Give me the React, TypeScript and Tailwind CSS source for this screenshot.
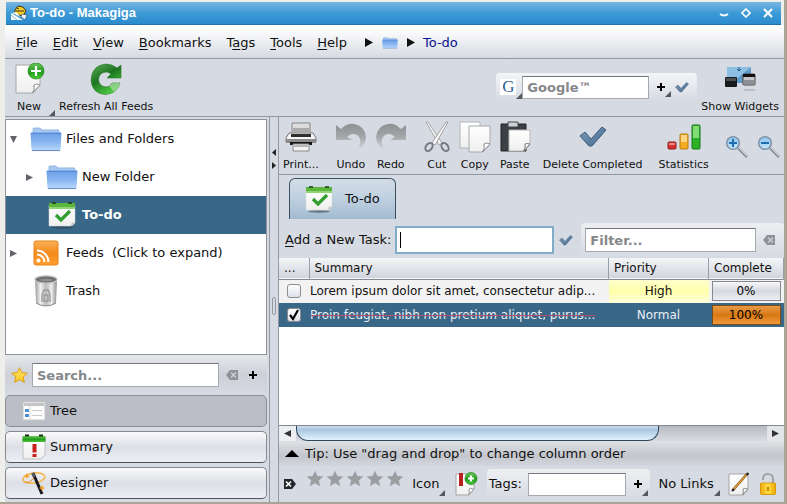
import React from "react";

type Kids = { children?: React.ReactNode };

function Gradients() {
  return (
    <svg width="0" height="0" className="absolute" aria-hidden="true">
      <defs>
        <linearGradient id="folder" x1="0" y1="0" x2="0" y2="1">
          <stop offset="0" stopColor="#6b9fe6" />
          <stop offset="0.5" stopColor="#86b4f0" />
          <stop offset="1" stopColor="#b4d6fb" />
        </linearGradient>
        <linearGradient id="green" x1="0" y1="0" x2="0" y2="1">
          <stop offset="0" stopColor="#6fca5a" />
          <stop offset="0.55" stopColor="#1f9a1c" />
          <stop offset="1" stopColor="#4cc93a" />
        </linearGradient>
        <linearGradient id="refresh" x1="0" y1="0" x2="0.6" y2="1">
          <stop offset="0" stopColor="#5fae58" />
          <stop offset="0.5" stopColor="#1d7420" />
          <stop offset="1" stopColor="#4ccf44" />
        </linearGradient>
        <linearGradient id="paper" x1="0" y1="0" x2="0" y2="1">
          <stop offset="0" stopColor="#ffffff" />
          <stop offset="1" stopColor="#efefef" />
        </linearGradient>
        <linearGradient id="orange" x1="0" y1="0" x2="0" y2="1">
          <stop offset="0" stopColor="#fbb25a" />
          <stop offset="0.5" stopColor="#f68a1c" />
          <stop offset="1" stopColor="#ffa030" />
        </linearGradient>
        <linearGradient id="metal" x1="0" y1="0" x2="1" y2="0">
          <stop offset="0" stopColor="#9a9a9a" />
          <stop offset="0.25" stopColor="#f0f0f0" />
          <stop offset="0.5" stopColor="#bababa" />
          <stop offset="0.75" stopColor="#ececec" />
          <stop offset="1" stopColor="#8c8c8c" />
        </linearGradient>
        <linearGradient id="fade" x1="0" y1="0" x2="0" y2="1">
          <stop offset="0" stopColor="#8e9194" />
          <stop offset="0.5" stopColor="#a3a6a9" />
          <stop offset="1" stopColor="#d0d3d8" />
        </linearGradient>
        <linearGradient id="steel" x1="0" y1="0" x2="1" y2="1">
          <stop offset="0" stopColor="#7d9cba" />
          <stop offset="1" stopColor="#466a8c" />
        </linearGradient>
        <linearGradient id="gold" x1="0" y1="0" x2="1" y2="0">
          <stop offset="0" stopColor="#f0a80c" />
          <stop offset="0.5" stopColor="#ffe04a" />
          <stop offset="1" stopColor="#eda400" />
        </linearGradient>
        <linearGradient id="lens" x1="0" y1="0" x2="0" y2="1">
          <stop offset="0" stopColor="#8cc4ee" />
          <stop offset="1" stopColor="#c5e6fa" />
        </linearGradient>
        <linearGradient id="star" x1="0" y1="0" x2="0" y2="1">
          <stop offset="0" stopColor="#ffe66a" />
          <stop offset="1" stopColor="#fbc51f" />
        </linearGradient>
      </defs>
    </svg>
  );
}

function FolderIcon({ className }: { className: string }) {
  return (
    <svg viewBox="0 0 32 26" preserveAspectRatio="none" className={className} aria-hidden="true">
      <path d="M3 8V2q0-1 1-1h6l2 2h16q1 0 1 1v6z" fill="#a9c8f1" stroke="#7ba4dc" strokeWidth="0.7" />
      <path d="M.5 6h31L30.500 24h-29z" fill="url(#folder)" />
      <path d="M1 6.500h30" stroke="#4d82cf" />
      <path d="M2 24.500h28" stroke="#6185b8" />
    </svg>
  );
}

function TodoIcon() {
  return (
    <svg viewBox="0 0 28 28" className="size-7 shrink-0" aria-hidden="true">
      <ellipse cx="14" cy="26.500" rx="11" ry="1.200" fill="#2c3f50" opacity="0.6" />
      <path d="M1 4h26v18q-2 3-6 3H1z" fill="url(#paper)" stroke="#d6d6d6" strokeWidth="0.5" />
      <path d="M1 2h26v6H1z" fill="#5cb63e" />
      <path d="M1 6h26v2H1z" fill="#8fd474" />
      <path d="M4 2h4M20 2h4" stroke="#163d10" strokeWidth="1.500" />
      <path d="M27 21q-1 4-7 4.500 4-1 3.500-3.500z" fill="#c9c9c9" />
      <path d="M8 14l5 5 9-9" fill="none" stroke="#2f9e2c" strokeWidth="3.200" />
    </svg>
  );
}

function FeedIcon() {
  return (
    <svg viewBox="0 0 26 26" className="size-[26px]" aria-hidden="true">
      <rect x="1" y="1" width="24" height="24" rx="2" fill="url(#orange)" stroke="#e98217" />
      <circle cx="5.500" cy="20.500" r="2" fill="#fff" />
      <path d="M4 14.500a7.500 7.500 0 0 1 7.500 7.500M4 10.500a11.500 11.500 0 0 1 11.500 11.500" fill="none" stroke="#fff" strokeWidth="2" />
    </svg>
  );
}

function TrashIcon() {
  return (
    <svg viewBox="0 0 24 32" className="h-8 w-6" aria-hidden="true">
      <path d="M1 4l1 24q10 6 20 0l1-24z" fill="url(#metal)" />
      <ellipse cx="12" cy="4.500" rx="11" ry="3.700" fill="#6e6e6e" stroke="#c6c6c6" strokeWidth="1.200" />
      <path d="M4 5q8-3 16 0-8 3-16 0z" fill="#8d8d8d" />
      <path d="M8 27v-7l2-5h4l2 5v7M10 20h4v6h-4z" fill="none" stroke="#9a9a9a" strokeWidth="1.300" />
      <path d="M2 28q10 6 20 0" fill="none" stroke="#8b8b8b" />
    </svg>
  );
}

function PlusBadge({ x, y, r }: { x: number; y: number; r: number }) {
  return (
    <g>
      <circle cx={x} cy={y} r={r} fill="url(#green)" stroke="#2b8d25" strokeWidth="0.8" />
      <path d={`M${x - r + 3} ${y}h${2 * r - 6}M${x} ${y - r + 3}v${2 * r - 6}`} stroke="#fff" strokeWidth="2.200" />
    </g>
  );
}

function NewIcon() {
  return (
    <svg viewBox="0 0 32 32" className="size-8" aria-hidden="true">
      <path d="M3 2h24v20l-7 8H3z" fill="url(#paper)" stroke="#a6a6a6" />
      <path d="M27 22q-4-2-6 0 1 5-1.500 8z" fill="#fdfdfd" stroke="#8d8d8d" />
      <PlusBadge x={23} y={8} r={8} />
    </svg>
  );
}

function RefreshIcon() {
  return (
    <svg viewBox="0 0 32 32" className="size-8" aria-hidden="true">
      <path d="M31 2v13H17l4-4q-2-2-5-2-7 .5-7.500 7.500Q9 23 16 24q4 0 6-4h8q-2 10-14 11.500Q2 31 1 17 2 2 16 1q6 0 11 4z" fill="url(#refresh)" stroke="#2c7c2b" strokeWidth="0.6" />
      <path d="M22 20h8q-1 6-6 9l-5-6q2-1 3-3z" fill="#b9dfb9" opacity="0.6" />
    </svg>
  );
}

function WidgetsIcon() {
  return (
    <svg viewBox="0 0 32 28" className="h-7 w-8" aria-hidden="true">
      <path d="M3 2h24v16H3z" fill="#5f9cca" />
      <path d="M3 2h24L10 16H3z" fill="#8dbfe2" />
      <path d="M15 2v4M13 4l2 2 2-2" stroke="#205784" fill="none" />
      <rect x="1" y="12" width="12" height="10" rx="1" fill="#17191c" />
      <path d="M2 13h10v3H2z" fill="#4b4e53" />
      <rect x="19" y="9" width="12" height="11" rx="1" fill="#c5c7ca" stroke="#444" />
      <path d="M19 9h12v3H19z" fill="#111" />
      <path d="M20 15h10v4H20z" fill="#8d9095" />
      <path d="M20 25h11" stroke="#b9bdc5" strokeWidth="2" />
    </svg>
  );
}

function PrintIcon() {
  return (
    <svg viewBox="0 0 32 32" className="size-8" aria-hidden="true">
      <path d="M7 2h18v11H7z" fill="#dcdcdc" stroke="#858585" />
      <path d="M8 7h16v4H8z" fill="#aaa" />
      <path d="M4 12h24l3 5v4H1v-4z" fill="#f5f5f5" stroke="#777" />
      <path d="M6 13h20v3H6z" fill="#2e2e2e" />
      <path d="M1 18h30v4H1z" fill="#8b8b8b" />
      <path d="M5 21h22v3H5z" fill="#141414" />
      <path d="M8 23h16v7H8z" fill="#f1f1f1" stroke="#8a8a8a" />
      <path d="M8 24h16v2H8z" fill="#b8b8b8" />
    </svg>
  );
}

function TurnIcon({ flip }: { flip?: boolean }) {
  return (
    <svg viewBox="0 0 32 32" className={flip ? "size-8 -scale-x-100" : "size-8"} aria-hidden="true">
      <path d="M1 4l5 4q6-6 13-5 11 2 12 13 0 8-8 12 3-6 2-10-2-5-7-5-3 0-6 3l5 3H1z" fill="url(#fade)" />
    </svg>
  );
}

function CutIcon() {
  return (
    <svg viewBox="0 0 28 32" className="h-8 w-7" aria-hidden="true">
      <path d="M3 1l2 0 14 21-3 2z" fill="#f1f1f1" stroke="#9b9b9b" strokeWidth="0.8" />
      <path d="M25 1l-2 0L9 22l3 2z" fill="#fcfcfc" stroke="#8d8d8d" strokeWidth="0.8" />
      <ellipse cx="6" cy="26" rx="3" ry="4.500" transform="rotate(38 6 26)" fill="none" stroke="#757a80" strokeWidth="2" />
      <ellipse cx="22" cy="26" rx="3" ry="4.500" transform="rotate(-38 22 26)" fill="none" stroke="#757a80" strokeWidth="2" />
    </svg>
  );
}

function CopyIcon() {
  return (
    <svg viewBox="0 0 32 32" className="size-8" aria-hidden="true">
      <path d="M1 1h20v26H1z" fill="url(#paper)" stroke="#b2b5b9" />
      <path d="M10 5h21v18l-7 8H10z" fill="url(#paper)" stroke="#a5a8ac" />
      <path d="M31 23q-4-2-6 0 1 5-1.500 8z" fill="#fdfdfd" stroke="#8d8d8d" />
    </svg>
  );
}

function PasteIcon() {
  return (
    <svg viewBox="0 0 32 32" className="size-8" aria-hidden="true">
      <path d="M2 3h25v27H2z" fill="#3c3f45" stroke="#222" />
      <path d="M9 1h10v5H9z" fill="#cfd1d4" stroke="#444" />
      <path d="M10 9h21v15l-6 6H10z" fill="url(#paper)" stroke="#b8b8b8" />
      <path d="M31 23q-4-1-5 0 1 4-1.500 7z" fill="#fdfdfd" stroke="#777" />
    </svg>
  );
}

function CheckMark({ className }: { className: string }) {
  return (
    <svg viewBox="0 0 28 22" className={className} aria-hidden="true">
      <path d="M1 10l5-4 6 7L23 1l4 3-14 16h-3z" fill="url(#steel)" stroke="#3f5f7e" strokeWidth="1" />
    </svg>
  );
}

function StatsIcon() {
  return (
    <svg viewBox="0 0 34 26" className="h-[26px] w-[34px]" aria-hidden="true">
      <rect x="1" y="18" width="8" height="7" rx="1" fill="#d8312e" stroke="#8b1d1b" />
      <rect x="2" y="19" width="6" height="2" fill="#ee8a86" />
      <rect x="13" y="10" width="8" height="15" rx="1" fill="#f6ab22" stroke="#b87a12" />
      <rect x="14" y="11" width="6" height="7" fill="#fbd685" />
      <rect x="25" y="1" width="8" height="24" rx="1" fill="#2bb224" stroke="#17761a" />
      <rect x="26" y="2" width="6" height="12" fill="#82dc76" />
    </svg>
  );
}

function ZoomIcon({ plus }: { plus?: boolean }) {
  return (
    <svg viewBox="0 0 24 24" className="size-6" aria-hidden="true">
      <path d="M13 13l9 9" stroke="#8b939c" strokeWidth="2.600" />
      <path d="M13 12l9 9" stroke="#d4d8dd" strokeWidth="1" />
      <circle cx="8" cy="8" r="6.300" fill="url(#lens)" stroke="#7f93a6" strokeWidth="1.600" />
      <path d={plus ? "M4 8h8M8 4v8" : "M4 8h8"} stroke="#1f6db0" strokeWidth="2" />
    </svg>
  );
}

const STAR = "M12 1l3.200 7 7.800.8-5.800 5.200 1.700 7.700L12 17.800 5.100 21.700l1.700-7.700L1 8.800 8.800 8z";

function EraseIcon({ className, dark }: { className: string; dark?: boolean }) {
  return (
    <svg viewBox="0 0 14 12" className={className} aria-hidden="true">
      <path d="M5 1h8v10H5L1 6z" fill={dark ? "#22252a" : "#8e9196"} />
      <path d="M6 3.500l5 5M11 3.500l-5 5" stroke={dark ? "#fff" : "#c9ccd2"} strokeWidth="1.600" />
    </svg>
  );
}

function PlusGlyph() {
  return (
    <svg viewBox="0 0 8 8" className="size-2" aria-hidden="true">
      <path d="M0 4h8M4 0v8" stroke="#000" strokeWidth="2" />
    </svg>
  );
}

function Corner() {
  return (
    <svg viewBox="0 0 6 6" className="size-[6px] self-end" aria-hidden="true">
      <path d="M6 0v6H0z" fill="#55585e" />
    </svg>
  );
}

function Triangle({ className }: { className: string }) {
  return (
    <svg viewBox="0 0 8 8" preserveAspectRatio="none" className={className} aria-hidden="true">
      <path d="M0 0l8 4-8 4z" fill="currentColor" />
    </svg>
  );
}

function TreeViewIcon() {
  return (
    <svg viewBox="0 0 24 20" className="h-5 w-6" aria-hidden="true">
      <path d="M1 1h22v18H1z" fill="#fcfcfc" stroke="#c7c7c7" />
      <path d="M2 2h20v3H2z" fill="#c3c5c8" />
      <path d="M3 8h4v3H3zM3 13h4v3H3z" fill="#4f8fd0" />
      <path d="M8 5v14" stroke="#ddd" />
      <path d="M10 9.500h10M10 14.500h10" stroke="#c8cacd" />
    </svg>
  );
}

function SummaryIcon() {
  return (
    <svg viewBox="0 0 24 26" className="h-[26px] w-6" aria-hidden="true">
      <path d="M1 3h22v18l-4 4H1z" fill="url(#paper)" stroke="#c0c0c0" />
      <path d="M.5 2h23v6H.5z" fill="url(#green)" />
      <path d="M3 1.500h4M17 1.500h4" stroke="#12330e" strokeWidth="2" />
      <path d="M10.500 10h4v8.500h-4zM10.500 20h4v3h-4z" fill="#c61f1c" />
    </svg>
  );
}

function WandIcon() {
  return (
    <svg viewBox="0 0 24 24" className="size-6" aria-hidden="true">
      <ellipse cx="12" cy="7" rx="11" ry="5" fill="none" stroke="#f3b64b" strokeWidth="1.500" transform="rotate(-8 12 7)" />
      <path d="M3 12q5 0 9-5" fill="none" stroke="#ee8a1c" />
      <path d="M11 2l9 21" stroke="#17191c" strokeWidth="3" />
      <path d="M10.500 2l2 4" stroke="#55585c" strokeWidth="3" />
      <path d="M5 2l1 2 2 1-2 1-1 2-1-2-2-1 2-1zM20 14l1 2 2 1-2 1-1 2-1-2-2-1 2-1z" fill="#f7a128" />
    </svg>
  );
}

function FlagNoteIcon() {
  return (
    <svg viewBox="0 0 24 24" className="size-6" aria-hidden="true">
      <path d="M2 2h18v15l-5 6H2z" fill="url(#paper)" stroke="#a5a5a5" />
      <path d="M5 1h4v13H5z" fill="#b8211f" />
      <path d="M20 17q-4-1-5 0 1 3-.5 6z" fill="#fff" stroke="#999" />
      <PlusBadge x={17} y={6.5} r={6} />
    </svg>
  );
}

function NoteIcon() {
  return (
    <svg viewBox="0 0 22 24" className="h-6 w-[22px]" aria-hidden="true">
      <path d="M1 2h19v15l-5 6H1z" fill="url(#paper)" stroke="#a5a5a5" />
      <path d="M20 17q-4-1-5 0 1 3-.5 6z" fill="#fff" stroke="#888" />
      <path d="M19 2L5 18" stroke="#7a4a12" strokeWidth="2.600" />
      <path d="M19 2L5 18" stroke="#e8a640" strokeWidth="1.200" />
      <path d="M20.500 1l-2 2M6 17L4 19" stroke="#222" strokeWidth="2" />
    </svg>
  );
}

function LockIcon() {
  return (
    <svg viewBox="0 0 18 24" className="h-6 w-[18px]" aria-hidden="true">
      <path d="M4 8V7q0-5 5-5t5 5v5" fill="none" stroke="#a3a6aa" strokeWidth="2.200" />
      <rect x="1.500" y="11" width="15" height="11.500" rx="1" fill="url(#gold)" stroke="#d79a08" />
      <path d="M8 15h2v4H8z" fill="#c58a05" />
    </svg>
  );
}

function AppIcon() {
  return (
    <svg viewBox="0 0 18 16" className="h-4 w-[18px]" aria-hidden="true">
      <path d="M5 5l3-4 5 1 3 4-3 5-8-2z" fill="#f8cb2d" stroke="#3b3410" />
      <path d="M6 6h8M7 3l2 1" stroke="#3b3410" />
      <path d="M12 9l5 1-2 5-4-3z" fill="#e9f2fb" stroke="#2c4d6b" strokeWidth="0.6" />
      <path d="M1 8l12 7H1zM2 8l4-1 5 5" fill="#fff" />
      <path d="M1 10l6 5M4 9l7 5" stroke="#84b9df" />
    </svg>
  );
}

function Mnemonic({ text, at }: { text: string; at: number }) {
  return (
    <>
      {text.slice(0, at)}
      <span className="underline underline-offset-2">{text[at]}</span>
      {text.slice(at + 1)}
    </>
  );
}

function Tool({ label, icon, className }: { label: string; icon: React.ReactNode; className?: string }) {
  return (
    <button type="button" className={`flex flex-col items-center gap-1 text-[11px] leading-4 whitespace-nowrap ${className ?? ""}`}>
      <span className="flex h-8 items-center">{icon}</span>
      {label}
    </button>
  );
}

function TreeRow({ children, className }: Kids & { className?: string }) {
  return <li className={`flex h-[38px] items-center ${className ?? ""}`}>{children}</li>;
}

function SideButton({ icon, label, pressed }: { icon: React.ReactNode; label: string; pressed?: boolean }) {
  return (
    <button
      type="button"
      aria-pressed={!!pressed}
      className={`flex h-8 items-center gap-[3px] rounded-[5px] border pl-[15px] text-left ${
        pressed
          ? "border-[#8b8e95] bg-[#bbbec7]"
          : "border-[#85888e] border-b-[#4f5258] bg-linear-to-b from-[#fafafb] via-[#dcdfe6] to-[#edeff5]"
      }`}
    >
      <span className="flex w-[26px] justify-center">{icon}</span>
      {label}
    </button>
  );
}

const field =
  "min-w-0 border border-[#a4a8af] border-t-[#74777d] bg-white px-1 text-[13px] font-bold text-black placeholder:text-[#85878a] placeholder:opacity-100 outline-none";

const menus: [string, number][] = [
  ["File", 0],
  ["Edit", 0],
  ["View", 0],
  ["Bookmarks", 0],
  ["Tags", 1],
  ["Tools", 0],
  ["Help", 0],
];

const tasks = [
  { done: false, text: "Lorem ipsum dolor sit amet, consectetur adip...", priority: "High", complete: 0 },
  { done: true, text: "Proin feugiat, nibh non pretium aliquet, purus...", priority: "Normal", complete: 100 },
];

function TitleBar() {
  return (
    <header className="mr-[3px] ml-px mt-0.5 flex h-[23px] items-center bg-linear-to-b from-[#78b7e1] via-[#3c9ad6] via-50% to-[#2a8bcd] pr-2 pl-1 text-white border-b border-[#2270a8]">
      <AppIcon />
      <h1 className="ml-0.5 flex-1 font-['Liberation_Sans',Arial,sans-serif] text-[13px] leading-5 font-bold">To-do - Makagiga</h1>
      <button type="button" aria-label="Minimize" className="mr-3">
        <svg viewBox="0 0 10 10" className="size-[10px]"><path d="M1 6q4 3 8 0" stroke="#fff" strokeWidth="2" fill="none" /></svg>
      </button>
      <button type="button" aria-label="Maximize" className="mr-3">
        <svg viewBox="0 0 10 10" className="size-[10px]"><path d="M5 1l4 4-4 4-4-4z" stroke="#fff" strokeWidth="1.600" fill="none" /></svg>
      </button>
      <button type="button" aria-label="Close">
        <svg viewBox="0 0 10 10" className="size-[10px]"><path d="M1 1l8 8M9 1L1 9" stroke="#fff" strokeWidth="2.200" fill="none" /></svg>
      </button>
    </header>
  );
}

function MenuBar() {
  return (
    <nav className="flex h-[34px] items-center border-b border-[#9498a1] bg-linear-to-b from-white from-10% to-[#d6dae2] pt-[2px] pl-[11px]">
      <ul className="flex gap-[15px]">
        {menus.map(([text, at]) => (
          <li key={text}>
            <button type="button"><Mnemonic text={text} at={at} /></button>
          </li>
        ))}
      </ul>
      <Triangle className="ml-[18px] h-[9px] w-2" />
      <FolderIcon className="ml-[9px] h-3 w-4" />
      <Triangle className="ml-[9px] h-[9px] w-2" />
      <a href="#todo" className="ml-2 text-[#0b1190]">To-do</a>
    </nav>
  );
}

function MainToolBar() {
  return (
    <div className="flex h-[58px] items-start border-b border-[#9498a1] pr-[5px] pt-1">
      <div className="flex h-[53px] pl-2">
        <Tool label="New" icon={<NewIcon />} />
        <span className="ml-1 flex"><Corner /></span>
      </div>
      <Tool label="Refresh All Feeds" icon={<RefreshIcon />} className="ml-1" />
      <div className="mt-[10px] mr-1 ml-auto flex h-7 items-center rounded-[4px] bg-linear-to-b from-[#f4f5f7] to-[#d6dae2] px-1">
        <button type="button" aria-label="Search engine" className="flex h-6 items-center">
          <span className="w-4 bg-white text-center font-['Liberation_Serif',serif] text-[17px] leading-4 text-[#2c5f94]">G</span>
          <Corner />
        </button>
        <input aria-label="Google search" placeholder="Google™" className={`${field} h-[23px] w-[127px]`} />
        <button type="button" aria-label="Add" className="ml-2 flex h-5 items-center"><PlusGlyph /><Corner /></button>
        <button type="button" aria-label="Search" className="mr-1 ml-1"><CheckMark className="h-[11px] w-[14px]" /></button>
      </div>
      <Tool label="Show Widgets" icon={<WidgetsIcon />} />
    </div>
  );
}

function Sidebar() {
  return (
    <aside className="flex w-[265px] shrink-0 flex-col border-r border-[#9498a1] pt-0.5 pr-[2px] pb-[3px]">
      <ul className="min-h-[235px] flex-1 border border-[#8d9199] bg-white">
        <TreeRow className="pl-1">
          <Triangle className="size-[7px] rotate-90 text-[#606368]" />
          <FolderIcon className="mr-1 ml-[13px] h-[25px] w-8" />Files and Folders
        </TreeRow>
        <TreeRow className="pl-5">
          <Triangle className="size-[7px] text-[#606368]" />
          <FolderIcon className="mr-1 ml-[13px] h-[25px] w-8" />New Folder
        </TreeRow>
        <TreeRow className="bg-[#386788] pl-[42px] font-bold text-white">
          <TodoIcon /><span className="ml-[6px]">To-do</span>
        </TreeRow>
        <TreeRow className="pl-1">
          <Triangle className="size-[7px] text-[#606368]" />
          <span className="mr-1 ml-[13px] flex w-8 justify-center"><FeedIcon /></span>
          <span className="whitespace-pre">Feeds  (Click to expand)</span>
        </TreeRow>
        <TreeRow className="pl-6">
          <span className="mr-1 flex w-8 justify-center"><TrashIcon /></span>Trash
        </TreeRow>
      </ul>
      <div className="flex h-10 items-center bg-linear-to-b from-[#e6e8ec] via-[#cdd0d7] to-[#d6dae2] pr-[10px] pl-1">
        <svg viewBox="0 0 24 24" className="mr-1 ml-0.5 size-[17px]" aria-hidden="true">
          <path d={STAR} fill="url(#star)" stroke="#d99c14" strokeWidth="1.400" />
        </svg>
        <input aria-label="Search" placeholder="Search..." className={`${field} h-6 flex-1`} />
        <button type="button" aria-label="Clear search" className="mr-[10px] ml-[6px]"><EraseIcon className="h-3 w-[14px]" /></button>
        <button type="button" aria-label="Add"><PlusGlyph /></button>
      </div>
      <div className="flex flex-col gap-1">
        <SideButton pressed icon={<TreeViewIcon />} label="Tree" />
        <SideButton icon={<SummaryIcon />} label="Summary" />
        <SideButton icon={<WandIcon />} label="Designer" />
      </div>
    </aside>
  );
}

function Splitter() {
  return (
    <div className="flex w-[9px] shrink-0 flex-col items-center border-r border-[#9498a1]">
      <Triangle className="mt-8 h-[7px] w-1 rotate-180 text-[#222]" />
      <Triangle className="mt-[6px] h-[7px] w-1 text-[#222]" />
      <span className="mt-32 h-[18px] w-1 rounded-sm border border-[#94979e]" />
    </div>
  );
}

function EditorToolBar() {
  return (
    <div className="flex h-[58px] items-start gap-2 border-b border-[#9498a1] pt-1 pl-1">
      <Tool label="Print..." icon={<PrintIcon />} />
      <Tool label="Undo" icon={<TurnIcon />} className="ml-2" />
      <Tool label="Redo" icon={<TurnIcon flip />} />
      <Tool label="Cut" icon={<CutIcon />} className="ml-2" />
      <Tool label="Copy" icon={<CopyIcon />} />
      <Tool label="Paste" icon={<PasteIcon />} />
      <Tool label="Delete Completed" icon={<CheckMark className="h-[22px] w-7" />} className="ml-1" />
      <Tool label="Statistics" icon={<StatsIcon />} className="ml-2" />
      <button type="button" aria-label="Zoom in" className="mt-[14px] ml-2"><ZoomIcon plus /></button>
      <button type="button" aria-label="Zoom out" className="mt-[14px]"><ZoomIcon /></button>
    </div>
  );
}

function Checkbox({ checked, label }: { checked: boolean; label: string }) {
  return (
    <span className="ml-2 grid size-[14px]">
      <input
        type="checkbox"
        defaultChecked={checked}
        aria-label={label}
        className="peer col-start-1 row-start-1 size-[14px] appearance-none rounded-[3px] border border-[#898c92] bg-linear-to-b from-white to-[#dde0e8]"
      />
      <svg viewBox="0 0 14 14" className="pointer-events-none invisible col-start-1 row-start-1 size-[14px] peer-checked:visible" aria-hidden="true">
        <path d="M3 7l3 4 5-9" fill="none" stroke="#000" strokeWidth="2.200" />
      </svg>
    </span>
  );
}

function TaskTable() {
  return (
    <table className="w-full table-fixed border-collapse text-[12px]">
      <colgroup>
        <col className="w-[30px]" />
        <col />
        <col className="w-[100px]" />
        <col className="w-[75px]" />
      </colgroup>
      <thead>
        <tr className="h-[21px] border-b border-[#85898f] bg-linear-to-b from-[#f4f5f7] to-[#d0d4dc] text-left">
          <th className="border-r border-[#9a9ea6] pl-[5px] font-normal">...</th>
          <th className="border-r border-[#9a9ea6] pl-[5px] font-normal">Summary</th>
          <th className="border-r border-[#9a9ea6] pl-[5px] font-normal">Priority</th>
          <th className="border-r border-[#9a9ea6] pl-[5px] font-normal">Complete</th>
        </tr>
      </thead>
      <tbody>
        {tasks.map((t) => (
          <tr key={t.text} className={t.done ? "h-6 bg-[#386788] text-[#e9f0f6]" : "h-6 bg-[#f2f2f3]"}>
            <td><Checkbox checked={t.done} label={t.text} /></td>
            <td className={t.done ? "whitespace-nowrap pl-px line-through decoration-[#b0506c] decoration-1" : "whitespace-nowrap pl-px"}>{t.text}</td>
            <td className={t.done ? "text-center" : "bg-linear-to-b from-[#ffffd0] via-[#ffffa8] to-[#ffffd8] text-center"}>{t.priority}</td>
            <td className="px-[3px]">
              <div
                role="progressbar"
                aria-label="Complete"
                aria-valuenow={t.complete}
                className={`h-5 border text-center leading-[18px] text-black ${
                  t.done
                    ? "border-[#7b4c18] bg-linear-to-b from-[#e99a45] via-[#d9780f] to-[#f09a3c]"
                    : "border-[#85888e] bg-linear-to-b from-[#f8f8fa] via-[#d5d8df] to-[#eceef3]"
                }`}
              >
                {t.complete}%
              </div>
            </td>
          </tr>
        ))}
      </tbody>
    </table>
  );
}

function StatusBar() {
  return (
    <div className="flex h-9 items-center justify-between pr-[7px] pl-1">
      <button type="button" aria-label="Clear rating"><EraseIcon dark className="h-3 w-[14px] -scale-x-100" /></button>
      <span className="-mt-[10px] flex gap-0.5" role="img" aria-label="Rating">
        {[1, 2, 3, 4, 5].map((n) => (
          <svg key={n} viewBox="0 0 24 24" className="size-[18px]" aria-hidden="true"><path d={STAR} fill="#9c9fa1" /></svg>
        ))}
      </span>
      <button type="button" className="flex h-6 items-center">Icon<Corner /></button>
      <button type="button" aria-label="Add flag"><FlagNoteIcon /></button>
      <div className="flex h-[30px] items-center rounded-[4px] bg-linear-to-b from-[#eff0f3] to-[#d6dae2] pr-0.5 pl-0.5">
        <label htmlFor="tags">Tags:</label>
        <input id="tags" className={`${field} ml-[6px] h-[23px] w-[98px]`} />
        <button type="button" aria-label="Add tag" className="ml-2 flex h-6 items-center"><PlusGlyph /><Corner /></button>
      </div>
      <button type="button" className="flex h-6 items-center whitespace-nowrap">No Links<Corner /></button>
      <button type="button" aria-label="Edit note"><NoteIcon /></button>
      <button type="button" aria-label="Lock"><LockIcon /></button>
    </div>
  );
}

function Editor() {
  return (
    <main className="flex min-w-0 flex-1 flex-col">
      <EditorToolBar />
      <div className="flex pt-[3px] pl-[10px]">
        <button
          type="button"
          className="flex h-[41px] w-[107px] items-center gap-3 rounded-t-[6px] border border-b-0 border-[#3a4f62] bg-linear-to-b from-[#d3dde7] via-[#bed0df] to-[#a3bbd0] pl-[15px]"
        >
          <TodoIcon />To-do
        </button>
      </div>
      <div className="flex h-[39px] items-center pt-[3px] pl-[6px]">
        <label htmlFor="task" className="whitespace-nowrap"><Mnemonic text="Add a New Task:" at={0} /></label>
        <span className="ml-1 flex h-7 w-[159px] shrink-0 items-center border-2 border-[#83acc8] bg-white pl-[3px]">
          <span className="h-4 w-px bg-black" />
          <input id="task" className="min-w-0 flex-1 outline-none" />
        </span>
        <button type="button" aria-label="Add task" className="mr-2 ml-[5px] shrink-0"><CheckMark className="h-[11px] w-[14px]" /></button>
        <div className="flex h-[34px] min-w-0 flex-1 items-center rounded-[4px] bg-linear-to-b from-[#eceef1] to-[#d6dae2] pr-2 pl-1">
          <input aria-label="Filter" placeholder="Filter..." className={`${field} h-6 flex-1`} />
          <button type="button" aria-label="Clear filter" className="ml-[6px] shrink-0"><EraseIcon className="h-3 w-[14px]" /></button>
        </div>
      </div>
      <section className="flex flex-1 flex-col bg-white"><TaskTable /></section>
      <div className="flex h-4 items-stretch border-t border-[#85898f] bg-[#c9ccd2]">
        <button type="button" aria-label="Scroll left" className="flex w-[17px] items-center justify-center bg-[#eceef1]">
          <Triangle className="size-[7px] rotate-180 text-[#333]" />
        </button>
        <div className="flex flex-1 bg-linear-to-b from-[#b7bac0] to-[#d8dbe1]">
          <div className="w-[77%] rounded-b-[12px] border border-t-0 border-[#30485c] bg-linear-to-b from-[#cddded] via-[#a9c6df] via-25% to-[#e3f3fd]" />
        </div>
        <button type="button" aria-label="Scroll right" className="flex w-[17px] items-center justify-center bg-[#e3e5e9]">
          <Triangle className="size-[7px] text-[#333]" />
        </button>
      </div>
      <p className="flex h-[25px] items-center bg-linear-to-b from-[#dfe1e5] via-[#c3c6cc] via-60% to-[#d3d6dc] pl-[6px]">
        <svg viewBox="0 0 14 7" className="mr-[6px] h-[7px] w-[14px]" aria-hidden="true"><path d="M7 0l7 7H0z" /></svg>
        Tip: Use "drag and drop" to change column order
      </p>
      <StatusBar />
    </main>
  );
}

export default function App() {
  return (
    <div className="flex min-h-screen flex-col border-r-[3px] border-b-2 border-[#aaa396] bg-[#eeeeea] pl-[5px] font-['DejaVu_Sans',sans-serif] text-[13px] leading-4 text-[#111]">
      <Gradients />
      <TitleBar />
      <div className="flex flex-1 flex-col bg-[#d6dae2]">
        <MenuBar />
        <MainToolBar />
        <div className="flex flex-1">
          <Sidebar />
          <Splitter />
          <Editor />
        </div>
      </div>
    </div>
  );
}
